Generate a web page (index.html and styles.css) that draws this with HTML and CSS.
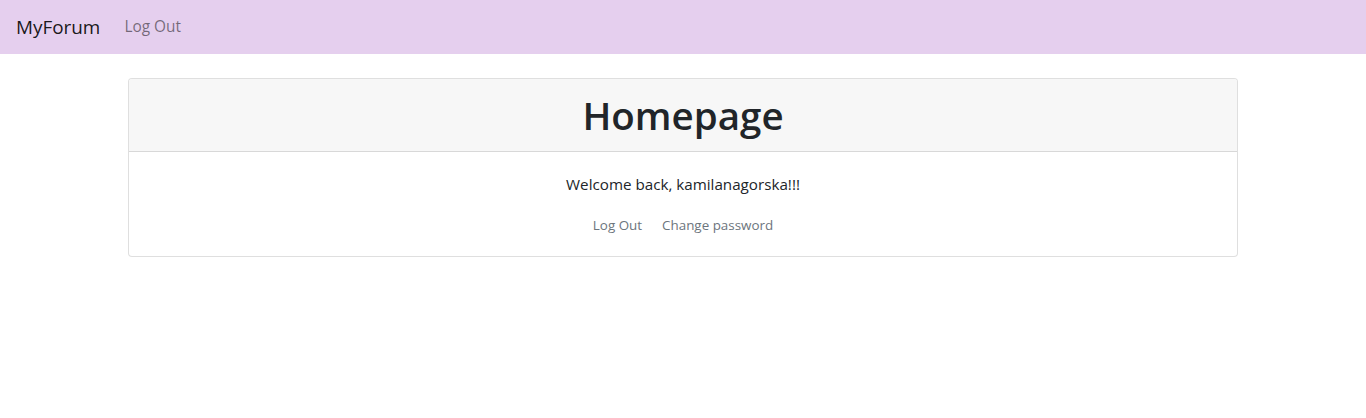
FILE: index.html
```html
<!DOCTYPE html>
<html lang="en">
<head>
<meta charset="utf-8">
<title>MyForum</title>
<link rel="stylesheet" href="styles.css">
</head>
<body>
<nav class="navbar">
  <a class="brand" href="#">MyForum</a>
  <a class="nav-link" href="#">Log Out</a>
</nav>
<main class="container">
  <section class="card">
    <header class="card-header">
      <h1>Homepage</h1>
    </header>
    <div class="card-body">
      <p class="welcome">Welcome back, kamilanagorska!!!</p>
      <div class="actions">
        <a class="action" href="#">Log Out</a>
        <a class="action" href="#">Change password</a>
      </div>
    </div>
  </section>
</main>
</body>
</html>
```
FILE: styles.css
```css
* { box-sizing: border-box; }
html, body { margin: 0; padding: 0; }
body {
  font-family: "Open Sans", "Noto Sans", "Liberation Sans", sans-serif;
  font-size: 15.2px;
  line-height: 1.5;
  color: #212529;
  background: #fff;
}
a { text-decoration: none; }
.navbar {
  display: flex;
  align-items: center;
  height: 54px;
  padding: 0 16px;
  background: #e5cfee;
}
.brand {
  font-size: 18.9px;
  line-height: 30px;
  color: rgba(0,0,0,.9);
  margin-right: 16px;
}
.nav-link {
  padding: 8px;
  font-size: 15.4px;
  color: rgba(0,0,0,.5);
}
.container {
  width: 1110px;
  margin: 24px auto 0;
}
.card {
  border: 1px solid rgba(0,0,0,.125);
  border-radius: 4px;
  background: #fff;
}
.card-header {
  background: #f7f7f7;
  border-bottom: 1px solid rgba(0,0,0,.125);
  border-radius: 3px 3px 0 0;
  padding: 12px 20px;
  text-align: center;
}
h1 {
  margin: 0;
  font-size: 38.5px;
  line-height: 48px;
  font-weight: 600;
}
.card-body {
  padding: 20px;
  text-align: center;
}
.welcome {
  margin: 0 0 19px;
  line-height: 24px;
}
.actions {
  display: flex;
  justify-content: center;
  gap: 20px;
}
.action {
  font-size: 13.4px;
  line-height: 21px;
  color: #6c757d;
}
```
